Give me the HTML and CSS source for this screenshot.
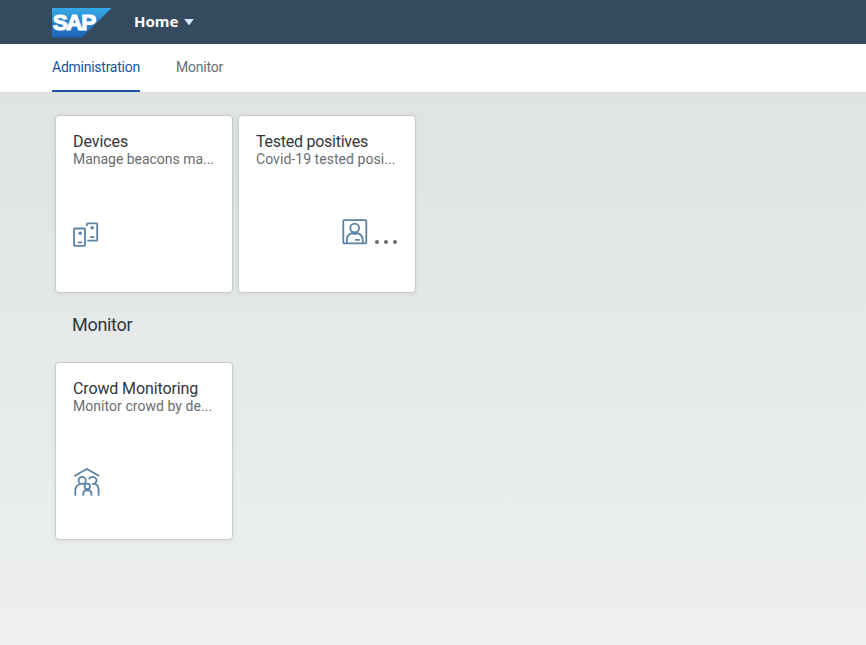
FILE: index.html
```html
<!DOCTYPE html>
<html lang="en">
<head>
<meta charset="utf-8">
<title>Home</title>
<link rel="stylesheet" href="styles.css">
</head>
<body>
<header class="shell">
  <svg class="logo" width="60" height="30" viewBox="0 0 60 30" role="img" aria-label="SAP">
    <defs><linearGradient id="sap" x1="0" y1="0" x2="0" y2="1"><stop offset="0" stop-color="#36a9e8"/><stop offset="1" stop-color="#1d61b5"/></linearGradient></defs>
    <polygon points="0,0 59.5,0 30,29.5 0,29.5" fill="url(#sap)"/>
    <text class="logo-text" x="0.7" y="22.3">SAP</text>
  </svg>
  <button class="home">Home <svg class="caret" width="10" height="6" viewBox="0 0 10 6"><path d="M.2 0h9.6L5.5 5.8q-.5.4-1 0z" fill="#d1e8ff"/></svg></button>
</header>
<nav class="tabs">
  <a class="tab active">Administration</a>
  <a class="tab">Monitor</a>
</nav>
<main class="content">
  <section class="tiles">
    <article class="tile">
      <h3 class="title">Devices</h3>
      <p class="subtitle manage">Manage beacons ma...</p>
      <svg class="icon" width="28" height="28" viewBox="0 0 28 28">
        <rect x="1" y="7.5" width="11" height="17.4" rx=".8"/>
        <path d="M13.9 5V3.2q0-.8.8-.8h8.7q.8 0 .8.8v15.7q0 .8-.8.8h-9.1M5 21.3h4M17.2 16.2h4.3"/>
        <circle class="dot" cx="7.2" cy="12.2" r="1.7"/><circle class="dot" cx="19.2" cy="6.8" r="1.7"/>
      </svg>
    </article>
    <article class="tile">
      <h3 class="title tested">Tested positives</h3>
      <p class="subtitle covid">Covid-19 tested posi...</p>
      <div class="value">
        <svg class="icon" width="28" height="28" viewBox="0 0 28 28">
          <rect x="1.3" y="3.2" width="23" height="23.2" rx=".8"/>
          <circle cx="12.7" cy="11.1" r="4.4"/>
          <path d="M4.8 26.2v-3.3q0-4.7 4.8-6.8 3.1 1.6 6.2 0 4.9 2.1 4.9 6.8v3.3M13 22.9h4.8"/>
        </svg>
        <span class="dots"><i></i><i></i><i></i></span>
      </div>
    </article>
  </section>
  <h2 class="group">Monitor</h2>
  <section class="tiles">
    <article class="tile">
      <h3 class="title crowd">Crowd Monitoring</h3>
      <p class="subtitle density">Monitor crowd by de...</p>
      <svg class="icon" width="28" height="28" viewBox="0 0 28 28">
        <path d="M1.3 8 13.8 1 26.3 8"/>
        <circle cx="9.2" cy="12.4" r="3.6"/>
        <path d="M2.3 27.8v-5.5q0-4.8 5.2-6.4M15.8 11.2q1.6-2.7 4.7-2.2 3.4.9 3 4-.4 1.9-2.2 2.7 4.3 1.4 4.3 6.4v5.7M19 15.8h2.4"/>
        <circle cx="14.3" cy="18.4" r="2.7"/>
        <path d="M10.2 27.8v-1.5q0-3.4 2.5-4.1 1.6.7 3.2 0 2.5.7 2.5 4.1v1.5"/>
      </svg>
    </article>
  </section>
</main>
</body>
</html>
```

FILE: styles.css
```css
* { box-sizing: border-box; }
body {
  margin: 0;
  height: 645px;
  overflow: hidden;
  display: flex;
  flex-direction: column;
  font-family: Roboto, "Liberation Sans", sans-serif;
  color: #32363a;
}
.shell {
  height: 44px;
  flex: none;
  display: flex;
  align-items: center;
  padding: 2px 0 0 52px;
  gap: 22px;
  background: #354a5f;
}
.logo-text { font: bold 22.5px "Liberation Sans", sans-serif; letter-spacing: -1.4px; fill: #fff; stroke: #fff; stroke-width: 1.1px; }
.home {
  display: flex;
  align-items: center;
  gap: 6px;
  padding: 0 0 4px;
  border: 0;
  background: none;
  color: #fff;
  font: bold 15px/20px "Noto Sans", sans-serif;
}
.caret { margin-top: 2px; }
.tabs {
  height: 49px;
  flex: none;
  display: flex;
  gap: 36px;
  padding-left: 52px;
  background: #fff;
  border-bottom: 1px solid #d9dcdd;
}
.tab { height: 48px; font-size: 14px; line-height: 47px; letter-spacing: -.2px; color: #6a6d70; white-space: nowrap; }
.active { width: 88px; letter-spacing: -.25px; color: #1853a0; border-bottom: 2px solid #1853a0; }
.content {
  flex: 1;
  padding: 22px 0 0 55px;
  background: linear-gradient(#dfe3e4, #eef0f0);
}
.tiles { display: flex; gap: 5px; }
.tile {
  width: 178px;
  height: 178px;
  padding: 17px;
  display: flex;
  flex-direction: column;
  background: #fff;
  border: 1px solid #c9cccd;
  border-radius: 4px;
  box-shadow: 0 1px 4px rgba(0, 0, 0, .08);
}
.title { margin: 0; font-size: 16px; line-height: 18px; font-weight: 400; letter-spacing: -.08px; white-space: nowrap; }
.tested { letter-spacing: -.25px; }
.crowd { letter-spacing: -.12px; }
.subtitle { margin: -1px 0 0; font-size: 14px; line-height: 18px; color: #6a6d70; white-space: nowrap; }
.manage { letter-spacing: -.03px; }
.covid, .density { letter-spacing: .05px; }
.icon { flex: none; margin-top: 53px; fill: none; stroke: #5b82a8; stroke-width: 1.8; overflow: visible; }
.dot { fill: #5b82a8; stroke: none; }
.value { display: flex; justify-content: flex-end; gap: 5px; margin: -4px 1px 0 0; }
.dots { display: flex; gap: 4.8px; padding-top: 76px; }
.dots i { width: 4px; height: 4px; border-radius: 50%; background: #6a6d70; }
.group { margin: 0; height: 69px; padding: 20px 0 0 17px; font-size: 18px; line-height: 24px; font-weight: 400; letter-spacing: -.3px; }
```
